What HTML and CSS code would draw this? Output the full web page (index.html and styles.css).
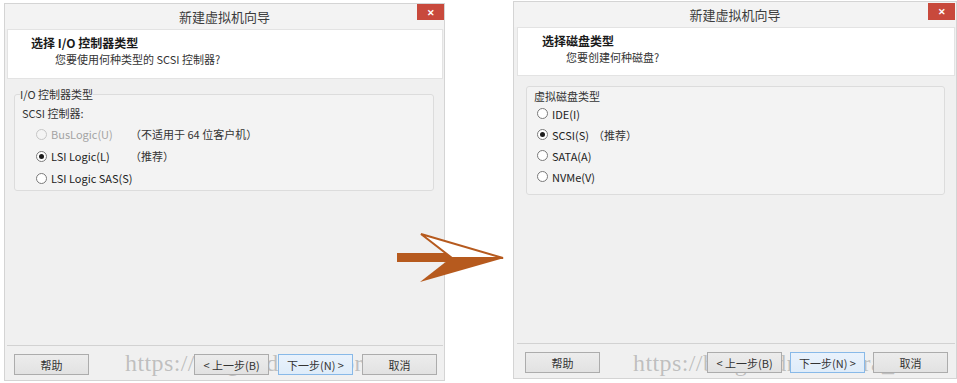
FILE: index.html
```html
<!DOCTYPE html>
<html lang="zh-CN">
<head>
<meta charset="utf-8">
<title>新建虚拟机向导</title>
<link rel="stylesheet" href="styles.css">
</head>
<body>
<div class="page">
  <div class="win win-left">
    <div class="titlebar"><span class="title">新建虚拟机向导</span><span class="close">✕</span></div>
    <div class="client">
      <div class="header">
        <div class="h-title">选择 I/O 控制器类型</div>
        <div class="h-sub">您要使用何种类型的 SCSI 控制器?</div>
      </div>
      <div class="body">
        <fieldset class="group">
          <legend>I/O 控制器类型</legend>
          <div class="sublabel">SCSI 控制器:</div>
          <div class="opt disabled"><span class="radio"></span><span class="opt-text wide">BusLogic(U)</span><span class="note">（不适用于 64 位客户机）</span></div>
          <div class="opt"><span class="radio checked"></span><span class="opt-text wide">LSI Logic(L)</span><span class="note">（推荐）</span></div>
          <div class="opt"><span class="radio"></span><span class="opt-text">LSI Logic SAS(S)</span></div>
        </fieldset>
      </div>
      <div class="footer">
        <button class="btn">帮助</button>
        <span class="spacer"></span>
        <button class="btn">&lt; 上一步(B)</button>
        <button class="btn btn-default">下一步(N) &gt;</button>
        <button class="btn">取消</button>
      </div>
    </div>
    <div class="watermark">https://blog.csdn.net/lora_shao</div>
  </div>

  <svg class="arrow" width="110" height="52" viewBox="0 0 110 52">
    <rect x="1" y="21" width="58" height="9" fill="#b65a1e"/>
    <polygon points="25,2 107,26 56,26" fill="#ffffff" stroke="#b65a1e" stroke-width="2" stroke-linejoin="miter"/>
    <polygon points="56,25 108,26 24,50" fill="#b65a1e"/>
  </svg>

  <div class="win win-right">
    <div class="titlebar"><span class="title">新建虚拟机向导</span><span class="close">✕</span></div>
    <div class="client">
      <div class="header">
        <div class="h-title">选择磁盘类型</div>
        <div class="h-sub">您要创建何种磁盘?</div>
      </div>
      <div class="body">
        <fieldset class="group">
          <div class="group-label">虚拟磁盘类型</div>
          <div class="opt"><span class="radio"></span><span class="opt-text">IDE(I)</span></div>
          <div class="opt"><span class="radio checked"></span><span class="opt-text">SCSI(S)</span><span class="note">（推荐）</span></div>
          <div class="opt"><span class="radio"></span><span class="opt-text">SATA(A)</span></div>
          <div class="opt"><span class="radio"></span><span class="opt-text">NVMe(V)</span></div>
        </fieldset>
      </div>
      <div class="footer">
        <button class="btn">帮助</button>
        <span class="spacer"></span>
        <button class="btn">&lt; 上一步(B)</button>
        <button class="btn btn-default">下一步(N) &gt;</button>
        <button class="btn">取消</button>
      </div>
    </div>
    <div class="watermark">https://blog.csdn.net/lora_shao</div>
  </div>
</div>
</body>
</html>
```

FILE: styles.css
```css
* { box-sizing: border-box; }

body {
  margin: 0;
  background: #ffffff;
  font-family: "Noto Sans CJK SC", "Noto Sans", sans-serif;
  font-size: 11px;
  color: #262626;
}

.page {
  position: relative;
  display: flex;
  align-items: flex-start;
  gap: 68px;
  width: 957px;
  height: 383px;
  padding: 3px 0 0 4px;
}

.win {
  position: relative;
  display: flex;
  flex-direction: column;
  width: 441px;
  height: 378px;
  background: #f0f0f0;
  border: 1px solid #d4d4d4;
  flex-shrink: 0;
}

.win-right {
  width: 444px;
  margin-top: -2px;
}

.titlebar {
  position: relative;
  height: 25px;
  display: flex;
  align-items: center;
  justify-content: center;
  background: #f3f3f3;
}

.title {
  font-size: 13px;
  color: #3c3c3c;
}

.close {
  position: absolute;
  right: 0;
  top: 0;
  width: 27px;
  height: 16px;
  background: #c8493c;
  color: #ffffff;
  font-size: 9px;
  font-weight: bold;
  display: flex;
  align-items: center;
  justify-content: center;
}

.win-right .close {
  right: 1px;
  top: 1px;
  height: 17px;
}

.client {
  flex: 1;
  display: flex;
  flex-direction: column;
  padding: 0 1px 0 2px;
}

.win-right .client {
  padding: 0 1px 0 3px;
}

.header {
  height: 50px;
  background: #ffffff;
  border: 1px solid #e3e3e3;
  padding: 5px 0 0 23px;
}

.win-right .header {
  height: 49px;
  padding: 5px 0 0 24px;
}

.h-title {
  font-size: 12px;
  font-weight: bold;
  line-height: 16px;
  color: #1a1a1a;
}

.h-sub {
  font-size: 11px;
  line-height: 16px;
  padding-left: 24px;
  color: #333333;
}

.body {
  flex: 1;
  padding: 8px 9px 0 7px;
}

.win-right .body {
  padding: 10px 10px 0 9px;
}

.group {
  margin: 0;
  border: 1px solid #dcdcdc;
  border-radius: 3px;
  background: #f3f3f3;
  padding: 0 0 1px 5px;
  min-width: 0;
}

.win-right .group {
  padding: 2px 0 7px 7px;
}

.group legend {
  padding: 0;
  line-height: 14px;
  color: #333333;
}

.group-label {
  line-height: 14px;
  color: #333333;
}

.sublabel {
  margin: 2px 0 0 2px;
  line-height: 20px;
  color: #333333;
}

.opt {
  display: flex;
  align-items: center;
  height: 22px;
  padding-left: 16px;
  color: #222222;
}

.win-right .opt {
  height: 21px;
  padding-left: 3px;
}

.radio {
  width: 11px;
  height: 11px;
  border-radius: 50%;
  border: 1px solid #7a7a7a;
  background: #ffffff;
  margin-right: 4px;
  display: flex;
  align-items: center;
  justify-content: center;
  flex-shrink: 0;
}

.radio.checked::after {
  content: "";
  width: 5px;
  height: 5px;
  border-radius: 50%;
  background: #1c1c1c;
}

.opt.disabled {
  color: #a3a3a3;
}

.opt.disabled .radio {
  border-color: #c6c6c6;
  background: #f4f4f4;
}

.opt-text.wide {
  width: 75px;
}

.note {
  margin-left: 4px;
  color: #333333;
}

.footer {
  display: flex;
  align-items: flex-start;
  gap: 9px;
  height: 35px;
  border-top: 1px solid #d2d2d2;
  padding: 8px 6px 0 7px;
}

.win-right .footer {
  gap: 8px;
  padding: 8px 7px 0 8px;
}

.spacer {
  flex: 1;
}

.btn {
  position: relative;
  z-index: 2;
  width: 75px;
  height: 21px;
  padding: 0;
  border: 1px solid #acacac;
  background: linear-gradient(#ececec, #e2e2e2);
  font-family: "Noto Sans CJK SC", "Noto Sans", sans-serif;
  font-size: 11px;
  color: #333333;
}

.btn-default {
  border-color: #88b9e8;
  background: linear-gradient(#e9f2fc, #dfecf9);
}

.watermark {
  position: absolute;
  z-index: 1;
  left: 120px;
  top: 347px;
  font-family: "Liberation Serif", serif;
  font-size: 24px;
  line-height: 25px;
  letter-spacing: 0.4px;
  color: rgba(120, 120, 120, 0.42);
  white-space: nowrap;
  pointer-events: none;
}

.win-right .watermark {
  left: 119px;
  top: 349px;
}

.arrow {
  position: absolute;
  z-index: 3;
  left: 396px;
  top: 232px;
}
```
